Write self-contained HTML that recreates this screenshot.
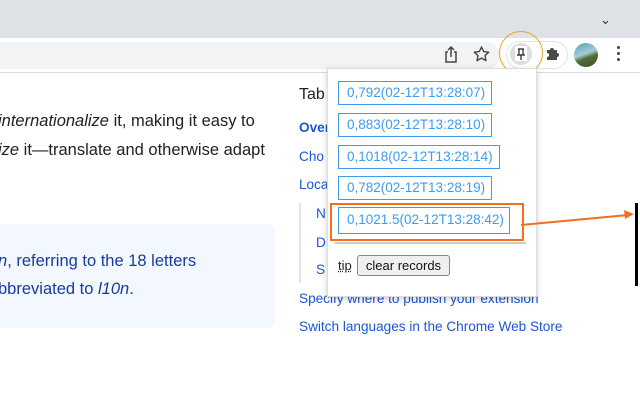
<!DOCTYPE html>
<html><head><meta charset="utf-8"><style>
*{margin:0;padding:0;box-sizing:border-box}
body{width:640px;height:400px;overflow:hidden;background:#fff;font-family:"Liberation Sans",Arial,sans-serif;position:relative}
.a{position:absolute;white-space:nowrap}
.t{font-size:16.5px;color:#202124}
.l{font-size:13.6px;color:#1a57d8}
.e{position:absolute;left:338px;height:24px;border:1.5px solid #3d9cf0;color:#3d9cf0;font-size:13.5px;line-height:21px;padding-left:8px}
</style></head><body>
<div class="a" style="left:0;top:0;width:640px;height:38px;background:#dee1e6"></div>
<div class="a" style="left:600px;top:12px;font-size:13px;color:#333">&#8964;</div>
<div class="a" style="left:0;top:38px;width:640px;height:35px;background:#fff;border-bottom:1px solid #dadce0"></div>
<div class="a" style="left:-20px;top:42px;width:520px;height:27px;background:#f1f3f4;border-radius:14px"></div>
<div class="a" style="left:506px;top:41px;width:62px;height:28px;border:1px solid #e3e3e3;border-radius:14px;background:#fff"></div>
<svg class="a" style="left:443px;top:45px" width="16" height="18" viewBox="0 0 16 18"><path d="M5 7H3v10h10V7h-2M8 12V2M5 5l3-3 3 3" fill="none" stroke="#444" stroke-width="1.5"/></svg>
<svg class="a" style="left:473px;top:46px" width="17" height="16" viewBox="0 0 17 16"><path d="M8.5 1l2.2 4.6 5 .6-3.7 3.4 1 5-4.5-2.5-4.5 2.5 1-5L1.3 6.2l5-.6z" fill="none" stroke="#444" stroke-width="1.4" stroke-linejoin="round"/></svg>
<div class="a" style="left:510px;top:43px;width:22px;height:22px;border-radius:11px;background:#ddd"></div>
<div class="a" style="left:515px;top:46px;width:12px;height:15px;background:#fff"></div>
<svg class="a" style="left:514px;top:47px" width="14" height="14" viewBox="0 0 14 14"><path d="M4 2h6M5 2v6M9 2v6M3 8h8M7 8v5" stroke="#222" stroke-width="1.2" fill="none"/></svg>
<div class="a" style="left:499px;top:31px;width:44px;height:44px;border:1.5px solid #f0a020;border-radius:50%"></div>
<svg class="a" style="left:544px;top:45px" width="17" height="17" viewBox="0 0 17 17"><path d="M3 5h3a2 2 0 1 1 4 0h3v3a2 2 0 1 1 0 4v3H3v-3a2 2 0 1 0 0-4z" fill="#4a4a4a"/></svg>
<div class="a" style="left:574px;top:43px;width:24px;height:24px;border-radius:50%;background:linear-gradient(160deg,#5d9bb7 0%,#9fcfd6 45%,#566e3a 60%,#3a4d26 100%)"></div>
<div class="a" style="left:617px;top:46px;width:3px;height:3px;background:#444;border-radius:50%;box-shadow:0 6px #444,0 12px #444"></div>

<div class="a t" style="left:-2px;top:112px"><i>internationalize</i> it, making it easy to</div>
<div class="a t" style="left:-2px;top:141px"><i>ize</i> it—translate and otherwise adapt</div>
<div class="a" style="left:-20px;top:224px;width:295px;height:104px;background:#f3f7fe;border-radius:8px"></div>
<div class="a t" style="left:-2px;top:252px;color:#1a3aa0"><i>n</i>, referring to the 18 letters</div>
<div class="a t" style="left:-2px;top:280px;color:#1a3aa0">bbreviated to <i>l10n</i>.</div>

<div class="a t" style="left:299px;top:86px;font-size:16px">Tab</div>
<div class="a l" style="left:299px;top:120px;font-weight:bold">Over</div>
<div class="a l" style="left:299px;top:149px">Cho</div>
<div class="a l" style="left:299px;top:177px">Loca</div>
<div class="a" style="left:299px;top:203px;width:2px;height:80px;background:#e4e4e4"></div>
<div class="a l" style="left:316px;top:206px">N</div>
<div class="a l" style="left:316px;top:235px">D</div>
<div class="a l" style="left:316px;top:262px">S</div>
<div class="a l" style="left:299px;top:291px">Specify where to publish your extension</div>
<div class="a l" style="left:299px;top:319px">Switch languages in the Chrome Web Store</div>

<div class="a" style="left:327px;top:68px;width:210px;height:229px;background:#fff;border:1px solid #ddd;box-shadow:0 2px 6px rgba(0,0,0,.2)"></div>
<div class="e" style="top:81px;width:154px">0,792(02-12T13:28:07)</div>
<div class="e" style="top:113px;width:154px">0,883(02-12T13:28:10)</div>
<div class="e" style="top:145px;width:162px">0,1018(02-12T13:28:14)</div>
<div class="e" style="top:176px;width:154px">0,782(02-12T13:28:19)</div>
<div class="e" style="top:207px;width:172px;height:27px;line-height:24px">0,1021.5(02-12T13:28:42)</div>
<div class="a" style="left:330px;top:203px;width:194px;height:38px;border:2px solid #f07020"></div>
<div class="a" style="left:335px;top:242px;width:191px;height:2px;background:#ccc"></div>
<div class="a" style="left:338px;top:258px;font-size:13px;color:#222;text-decoration:underline dotted">tip</div>
<div class="a" style="left:357px;top:255px;width:93px;height:21px;border:1px solid #888;border-radius:3px;background:#efefef;font-size:13px;color:#111;text-align:center;line-height:19px">clear records</div>
<svg class="a" style="left:0;top:0" width="640" height="400"><line x1="521" y1="225" x2="628" y2="215" stroke="#f07020" stroke-width="2"/><path d="M634 214l-10-4 1 9z" fill="#f07020"/></svg>
<div class="a" style="left:635px;top:203px;width:3px;height:83px;background:#000"></div>
</body></html>
